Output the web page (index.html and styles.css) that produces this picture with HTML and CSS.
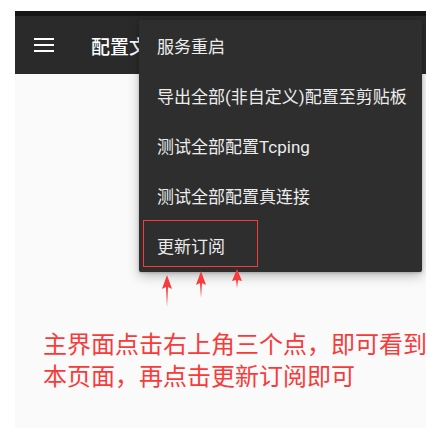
FILE: index.html
```html
<!DOCTYPE html>
<html lang="zh-CN">
<head>
    <meta charset="UTF-8">
    <title>更新订阅</title>
    <link rel="stylesheet" href="styles.css">
</head>
<body>

    <div class="screen">
        <div class="statusbar"></div>

        <header class="toolbar">
            <svg class="menu-icon" width="20" height="14" viewBox="0 0 20 14">
                <rect x="0" y="0" width="20" height="2" fill="#fff"/>
                <rect x="0" y="6" width="20" height="2" fill="#fff"/>
                <rect x="0" y="12" width="20" height="2" fill="#fff"/>
            </svg>
            <h1 class="title">配置文件</h1>
        </header>

        <main class="content">
            <p class="note">主界面点击右上角三个点，即可看到<br>本页面，再点击更新订阅即可</p>
        </main>

        <!-- 弹出菜单 -->
        <ul class="popup">
            <li>服务重启</li>
            <li>导出全部(非自定义)配置至剪贴板</li>
            <li>测试全部配置Tcping</li>
            <li>测试全部配置真连接</li>
            <li class="marked">更新订阅</li>
        </ul>

        <!-- 标注箭头 -->
        <svg class="arrows" width="120" height="50" viewBox="0 0 120 50">
            <polygon points="22,6 17,20 21,18 22,38 23,18 27,20" fill="#f93a3a"/>
            <polygon points="56,2 51,16 55,14 56,29 57,14 61,16" fill="#f93a3a"/>
            <polygon points="92,0 87,12 91,11 92,19 93,11 97,12" fill="#f93a3a"/>
        </svg>
    </div>

</body>
</html>
```

FILE: styles.css
```css
body { margin: 0; background: #fff; font-family: Roboto, "Noto Sans CJK SC", sans-serif; }
.screen { position: relative; margin: 11px 0 0 15px; width: 411px; height: 417px; background: #fafafa; overflow: hidden; }
.statusbar { height: 5px; background: #161616; }
.toolbar { height: 58px; background: #2a2a2a; display: flex; align-items: center; padding-left: 19px; }
.menu-icon { display: block; flex-shrink: 0; }
/* 标题被菜单挡住，只露出前面一截 */
.title { margin: 0 0 0 37px; width: 48px; overflow: hidden; white-space: nowrap; font-size: 19px; font-weight: 500; color: #fff; }
.content { padding: 255px 0 0 28px; }
.note { margin: 0; font-size: 24px; line-height: 32px; color: #f93a3a; white-space: nowrap; }
/* 菜单盖在工具栏和内容上面 */
.popup { position: absolute; left: 124px; top: 9px; width: 283px; margin: 0; padding: 2px 0 0; list-style: none; background: #2e2e2e; border-radius: 2px; box-shadow: 0 4px 12px rgba(0, 0, 0, 0.25), 0 1px 3px rgba(0, 0, 0, 0.2); }
.popup li { height: 50px; line-height: 50px; padding-left: 18px; font-size: 17px; color: #ececec; }
.popup li.marked { position: relative; }
.popup li.marked::after { content: ""; position: absolute; left: 4px; top: -2px; width: 113px; height: 45px; border: 1px solid #f93a3a; }
.arrows { position: absolute; left: 130px; top: 258px; }
```
